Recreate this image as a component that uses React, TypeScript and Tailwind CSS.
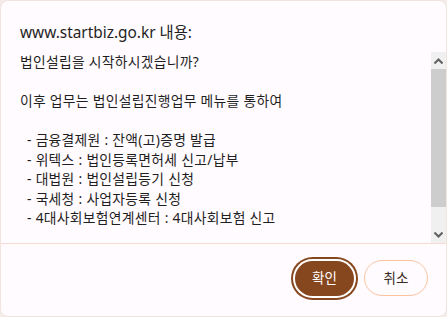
const lines = [
  '법인설립을 시작하시겠습니까?',
  '',
  '이후 업무는 법인설립진행업무 메뉴를 통하여',
  '',
  '- 금융결제원 : 잔액(고)증명 발급',
  '- 위텍스 : 법인등록면허세 신고/납부',
  '- 대법원 : 법인설립등기 신청',
  '- 국세청 : 사업자등록 신청',
  '- 4대사회보험연계센터 : 4대사회보험 신고',
  '',
]

function Chevron({ up }: { up?: boolean }) {
  return (
    <svg width="9" height="6" viewBox="0 0 9 6" className={up ? '' : 'rotate-180'}>
      <path d="M0.5 5.5 L4.5 1.5 L8.5 5.5" fill="none" stroke="#606060" strokeWidth="2" />
    </svg>
  )
}

export default function App() {
  return (
    <div
      className="h-[317px] w-[447px] overflow-hidden bg-[#f3ece8]"
      style={{ fontFamily: '"Segoe UI", "Noto Sans", "Noto Sans CJK KR", sans-serif' }}
    >
      <div className="flex h-full flex-col rounded-[8px] border border-[#f1e4dc] bg-[#fffbfe]">
        <div className="pl-[19px] pt-[20px] text-[15.4px] leading-[24px] text-[#1f1f1f]">
          www.startbiz.go.kr 내용:
        </div>
        <div className="mt-[7px] flex h-[191px]">
          <div className="flex-1 overflow-hidden pl-[19px] text-[13.8px] leading-[19.5px] tracking-[0.3px] text-[#1f1f1f]">
            {lines.map((line, i) => (
              <div key={i} className={`h-[19.5px] whitespace-pre ${line.startsWith('-') ? 'pl-[7px]' : ''}`}>
                {line}
              </div>
            ))}
          </div>
          <div className="flex w-[15px] flex-col bg-[#f0f0f0]">
            <div className="flex h-[17px] items-center justify-center">
              <Chevron up />
            </div>
            <div className="h-[138px] bg-[#cdcdcd]" />
            <div className="flex-1" />
            <div className="flex h-[17px] items-center justify-center">
              <Chevron />
            </div>
          </div>
        </div>
        <div className="h-px bg-[#f9dccf]" />
        <div className="flex flex-1 items-start justify-end gap-[10px] pr-[18px] pt-[16px]">
          <button
            type="button"
            className="mt-px h-[35px] w-[59px] rounded-full bg-[#86471f] text-[13.5px] text-white shadow-[0_0_0_2px_#ffffff,0_0_0_4px_#86471f]"
          >
            확인
          </button>
          <button
            type="button"
            className="h-[36px] w-[64px] rounded-full border border-[#fbc3a2] bg-[#fffbfe] text-[13.5px] text-[#3a2a22]"
          >
            취소
          </button>
        </div>
      </div>
    </div>
  )
}
